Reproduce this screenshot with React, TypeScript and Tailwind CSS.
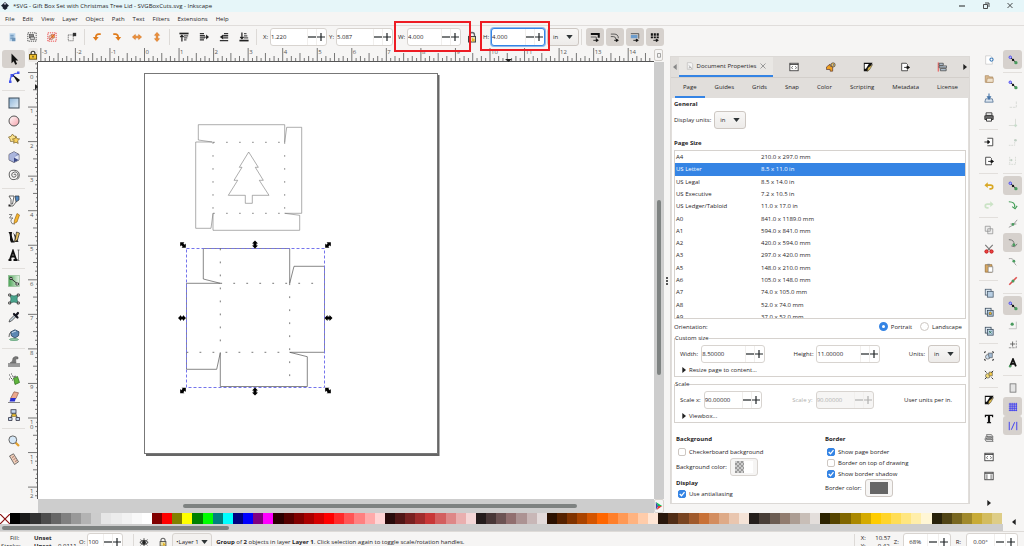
import type { ReactNode } from "react";
import clsx from "clsx";

const icons: Record<string, ReactNode> = {
  // toolbar
  selectAll: <><rect x="3" y="1.500" width="7" height="9.500" fill="#b9d3ea" /><path d="M4 4h4M4 6h4M4 8h3" stroke="#5d88b0" /><rect x="6" y="7" width="4" height="4" fill="#6d94b8" /></>,
  selectLayers: <><rect x="1" y="1" width="10" height="10" fill="none" stroke="#333" strokeDasharray="1.500 1" /><rect x="3" y="3" width="5" height="4" fill="#888" stroke="#444" strokeWidth=".7" /><path d="M4 6h5v3H4z" fill="#ccc" stroke="#444" strokeWidth=".7" /></>,
  deselect: <><rect x="1" y="1" width="10" height="10" fill="none" stroke="#e33" strokeDasharray="1.500 1" /><circle cx="5" cy="6.500" r="2.700" fill="#e9c9a8" stroke="#a66" strokeWidth=".7" /><path d="M5 3h4v4H6z" fill="#f3a53c" stroke="#a55" strokeWidth=".6" /><path d="M2 10l8-8" stroke="#d22" strokeWidth=".7" /></>,
  touch: <><rect x="1.500" y="3.500" width="6" height="7" fill="none" stroke="#555" strokeDasharray="1.500 1" /><rect x="7" y="1" width="4" height="4" fill="#333" /></>,
  rotL: <><path d="M10.500 2.500H8Q4.500 2.500 4.500 7" fill="none" stroke="#e07b1a" strokeWidth="2" /><path d="M1 6h7l-3.500 4.500z" fill="#e07b1a" /></>,
  rotR: <><path d="M1.500 2.500H4Q7.500 2.500 7.500 7" fill="none" stroke="#e07b1a" strokeWidth="2" /><path d="M4 6h7l-3.500 4.500z" fill="#e07b1a" /></>,
  flipH: <path d="M.5 6l3.500-3v2h4V3l3.500 3L8 9V7H4v2z" fill="#f0913a" stroke="#c9640a" strokeWidth=".6" />,
  flipV: <path d="M6 .5l3 3.500H7v4h2l-3 3.500L3 8h2V4H3z" fill="#f0913a" stroke="#c9640a" strokeWidth=".6" />,
  raiseTop: <><path d="M.5 1.800h11" stroke="#222" strokeWidth="2" /><path d="M6 4.500h5M6 7h4M6 9.500h3" stroke="#555" strokeWidth="1.500" /><path d="M3.500 11.500V4M1.500 6l2-2 2 2" fill="none" stroke="#222" strokeWidth="1.500" /></>,
  raise: <><path d="M1 2h5M1 4.500h6M1 7h6M1 9.500h5" stroke="#333" strokeWidth="1.600" /><path d="M6 5.700h2.500V3L12 6 8.500 9V6.500H6z" fill="#222" /></>,
  lower: <><path d="M6 2h5M5 4.500h6M5 7h6M1 10.300h10" stroke="#333" strokeWidth="1.600" /><path d="M5 3L1 6l4 3z" fill="#222" /></>,
  lowerBottom: <><path d="M.5 10.300h11" stroke="#222" strokeWidth="2" /><path d="M6 2h3M6 4.500h4M6 7h5" stroke="#555" strokeWidth="1.500" /><path d="M3.500 .5V8M1.500 6l2 2 2-2" fill="none" stroke="#222" strokeWidth="1.500" /></>,
  lock: <><path d="M3.700 6V3.800q0-2.300 2.300-2.300t2.300 2.300V6" fill="none" stroke="#333" strokeWidth="1.400" /><rect x="1.700" y="5.500" width="8.600" height="5.500" fill="#f2c230" stroke="#5c4500" /><path d="M6 7v2" stroke="#333" strokeWidth="1.300" /></>,
  unlock: <><path d="M3.500 6V4q0-2.500 2.500-2.500T8.500 4v2" fill="none" stroke="#666" strokeWidth="1.300" /><rect x="2.500" y="5.500" width="7" height="5.500" fill="#e9dfa6" stroke="#444" /><path d="M6 7l3.500 2L6 11z" fill="#e5b32b" /></>,
  scaleStroke: <><path d="M1 2.500h9.500V7" fill="none" stroke="#111" strokeWidth="2.400" /><path d="M1 6h6.500v2.500" fill="none" stroke="#444" /><path d="M4 10h5M7.500 8.500L10 10 7.500 11.500z" stroke="#111" fill="#111" /></>,
  scaleCorner: <><path d="M1 2.500h4q5 0 5 5" fill="none" stroke="#444" /><path d="M1 5.500h3q3 0 3 3" fill="none" stroke="#444" /><path d="M5 10h4M7.500 8.500L10 10 7.500 11.500z" stroke="#111" fill="#111" /></>,
  scaleGrad: <><path d="M1 2h9.500v6" fill="none" stroke="#444" /><path d="M1 3.500h8v4H1z" fill="#6c9ccc" /><path d="M4 10h5M7.500 8.500L10 10 7.500 11.500z" stroke="#111" fill="#111" /></>,
  scalePattern: <><path d="M1 3h10" stroke="#111" strokeWidth="3" strokeDasharray="2.500 1" /><path d="M1 6.500h10" stroke="#111" strokeWidth="2" strokeDasharray="2.500 1" /><path d="M4 10h5M7.500 8.500L10 10 7.500 11.500z" stroke="#111" fill="#111" /></>,
  // toolbox
  select: <path d="M3.500 .5v9.800l2.200-2 1.600 3.500 1.800-.9L7.500 7.500h2.800z" fill="#111" />,
  node: <><path d="M2 11Q2 2 11 2" fill="none" stroke="#4a5cf0" strokeWidth="1.200" /><path d="M1 9.500h2.500V12H1zM9 .5h2.500V3H9zM2.500 3H6v3H2.500z" fill="#4455ee" /><path d="M4.500 3.500l7.500 5.500-2.500 2.500z" fill="#111" /></>,
  rect: <rect x="1" y="1" width="10" height="10" fill="url(#gBlue)" stroke="#3a4a58" />,
  circle: <circle cx="6" cy="6" r="5" fill="url(#gPink)" stroke="#444" strokeWidth=".9" />,
  star: <><path d="M4.500 1l1.300 2L8 3.300 7.300 8 2.500 8.500 2 6 .5 4l2.500-.7z" fill="#fbe28c" stroke="#7a6226" strokeWidth=".7" /><path d="M8 3.500l1 2.200 2.600.2-2 1.900.6 2.700L8 9.200l-2.400 1 .5-2.500-1.700-1.800L7 5.700z" fill="#fbd15b" stroke="#7a6226" strokeWidth=".7" /></>,
  cube: <><path d="M6 .7l5 2.700v5.500L6 11.500 1 8.900V3.400z" fill="#8f9bc9" stroke="#445" strokeWidth=".7" /><path d="M1.300 3.500L6 1l3 1.600L6.500 6v5L1.300 8.700z" fill="#aab5dc" /><path d="M6.500 6l4.200-2v4.800L6.500 11z" fill="#dfe4f4" /><path d="M6 6.500v4.800L10.500 9z" fill="#3d4a86" /></>,
  spiral: <path d="M6 6q0-1 1-1t1 1.500T6 8.200 3.700 6 6.500 3 10 6.300 6 10.600 1.200 6 6 1.200 11.300 6q0 3-2 4.500" fill="none" stroke="#555" strokeWidth=".9" />,
  bezier: <><path d="M1 1h5L4.500 9H3Q4 4 1 1zM2 11h3" fill="#fff" stroke="#444" strokeWidth=".8" /><path d="M7 1h4v4L8 7zM8 7l-3 4" fill="#4f86c0" stroke="#333" strokeWidth=".7" /><rect x=".5" y="9.500" width="2" height="2" fill="#222" /></>,
  pencil: <><path d="M1 1.500h3L1.500 5H5Q2 6.500 3 8.500q0 3 4 2.500" fill="none" stroke="#666" strokeWidth=".8" /><path d="M9 .5l2.500 1.500L9 9l-3 1.500L6.500 7z" fill="#f6b52d" stroke="#8a5a10" strokeWidth=".6" /></>,
  calligraphy: <><path d="M.5 1H4Q3 6 6.500 11.500H3Q1.500 10 2 6 2 3 .5 1z" fill="#111" /><path d="M4.500 1q3 4 2 10h4L8 5z" fill="#222" /><path d="M8.500 1L11.500 2 9.500 9 6.500 11l1-4z" fill="#e7c161" stroke="#222" strokeWidth=".7" /></>,
  text: <><path d="M.5 11h3M5.500 11h4M2 10.500L5 2l3 8.500M3.200 7.500h4" fill="none" stroke="#111" strokeWidth="1.900" /><path d="M9.500 1h2M9.500 11.500h2M10.500 1v10.500" stroke="#555" strokeWidth=".7" /></>,
  gradient: <><rect x=".5" y=".5" width="11" height="11" fill="url(#gGreen)" stroke="#89b78e" strokeWidth=".6" /><path d="M3 3.500l6 5" stroke="#333" /><path d="M2 2.500h2v2H2zM8 8h2.500v2H8z" fill="#fff" stroke="#222" strokeWidth=".8" /></>,
  mesh: <><path d="M2 2q4 2 8 0-2 4 0 8-4-2-8 0 2-4 0-8z" fill="#49a38c" stroke="#2d6d5c" strokeWidth=".7" /><path d="M.7 1h2v2h-2zM9.300 1h2v2h-2zM.7 9h2v2h-2zM9.300 9h2v2h-2z" fill="#fff" stroke="#222" strokeWidth=".8" /></>,
  dropper: <><path d="M1 11l1-2.500L6.500 4 8 5.500 3.500 10z" fill="#c5d5e0" stroke="#444" strokeWidth=".8" /><path d="M6 3l3.500 3.500M8 4.500L10 2" stroke="#15151f" strokeWidth="2.200" strokeLinecap="round" /></>,
  bucket: <><ellipse cx="6" cy="10.500" rx="4.500" ry="1" fill="#9fc7ae" stroke="#4d9b6a" strokeWidth=".7" /><path d="M2.500 3L7 .8l4 2-.5 4L7 9 3.500 7z" fill="#5c88b3" stroke="#2b4159" strokeWidth=".8" /><path d="M4 3.500l4-1.500" stroke="#cde" /><path d="M3 3q-2 1-2 5" stroke="#555" fill="none" strokeWidth=".9" /></>,
  tweak: <><path d="M0 8h12v4H0z" fill="#999" /><path d="M2 8q3-1 3-5 2-2.500 5-1v2Q7 2.500 8 8z" fill="#777" stroke="#555" strokeWidth=".5" /></>,
  spray: <><path d="M1 2h1M3 1h1M4 3h1M2 4h1M1 6h1M3 5.500h1M4 7h1" stroke="#555" /><path d="M5.500 5l4-1.500 2 6-4.500 2z" fill="#5fb53c" stroke="#2d6b1c" strokeWidth=".7" /><path d="M5 3.500l2.500-1 .8 1.700L6 5z" fill="#777" /></>,
  eraser: <><path d="M6 .8l4.500 1L8 7.500H2.500z" fill="#eda98d" stroke="#7a4a3a" strokeWidth=".6" /><path d="M2.700 7h5.200L6.800 10.500H1.500z" fill="#2a2fd0" /><path d="M0 11.500h12" stroke="#555" strokeWidth=".7" /></>,
  connector: <><path d="M5 4L2.500 9M7 4l2.500 5" stroke="#444" /><rect x="3" y=".7" width="5" height="3.500" fill="#c3d7ee" stroke="#334" strokeWidth=".8" /><rect x="4" y="5" width="4" height="2.500" fill="#f3c02e" stroke="#664" strokeWidth=".6" /><path d="M.5 8.500h3.500v3H.5zM8 8.500h3.500v3H8z" fill="#c3d7ee" stroke="#334" strokeWidth=".8" /></>,
  zoom: <><path d="M7.500 7.500L11 11" stroke="#e3a02c" strokeWidth="2.200" /><circle cx="4.800" cy="4.800" r="3.900" fill="#d6e8f7" stroke="#666" /></>,
  measure: <><path d="M1.500 3l4-2.200 5 8L6.500 11.500z" fill="#f0cfb9" stroke="#555" strokeWidth=".8" /><path d="M4 4.500l2-1M5.500 6.500l2-1M7 8.500l2-1" stroke="#855" strokeWidth=".7" /></>,
  // commands
  newDoc: <><path d="M2 1h6l2 2v8H2z" fill="#fff" stroke="#bbb" strokeWidth=".7" /><circle cx="9" cy="5.500" r="1.900" fill="#fff" stroke="#3b7ab8" strokeWidth="1.300" /></>,
  open: <><path d="M1.500 2h4l1 1.500h4V10h-9z" fill="#d9b98f" stroke="#a9855a" strokeWidth=".8" /><path d="M4 5h7v5H3z" fill="#f0e2cc" stroke="#a9855a" strokeWidth=".7" /></>,
  save: <><path d="M2 7h8l1 4H1z" fill="#dbe5ef" stroke="#4a6a90" strokeWidth=".9" /><path d="M6 .5v5M4.200 4.500L6 7.500l1.800-3z" fill="#4775a8" stroke="#4775a8" strokeWidth="1.300" /></>,
  print: <><path d="M1 4.500h10v4.500H1z" fill="#777" stroke="#222" /><path d="M2.500 1h7v3h-7zM3 7.500h6V11H3z" fill="#fff" stroke="#222" /></>,
  import: <><path d="M4 1.500h6.500v9H4" fill="#fff" stroke="#333" /><path d="M.5 6h5M4.500 4L7 6 4.500 8z" stroke="#111" fill="#111" /></>,
  export: <><path d="M9 4V3L7.500 1.500H2v9h7V9" fill="#fff" stroke="#333" /><path d="M5 6.500h4M8.500 4.500L11.500 6.500l-3 2z" stroke="#111" fill="#111" /></>,
  undo: <><path d="M3 5h5q2.500 0 2.500 2.200T8 9.500H6.500" fill="none" stroke="#d9a825" strokeWidth="2" /><path d="M4.500 1.500v7L.5 5z" fill="#d9a825" /></>,
  redo: <><path d="M9 5H4Q1.500 5 1.500 7.200T4 9.500h1.500" fill="none" stroke="#cbe3c6" strokeWidth="2" /><path d="M7.500 1.500v7l4-3.500z" fill="#cbe3c6" /></>,
  copy: <path d="M1.500 1.500h6v6h-6zM4.500 4.500h6v6h-6z" fill="#eee" stroke="#888" strokeWidth=".8" />,
  cut: <><path d="M1.500 1L8 8M10.500 1L4 8" stroke="#777" strokeWidth="1.300" /><circle cx="3" cy="9" r="2" fill="#e44" stroke="#b11" /><circle cx="9" cy="9" r="2" fill="#e44" stroke="#b11" /></>,
  paste: <><path d="M1.500 2h8v9h-8z" fill="#d8a860" stroke="#8a6430" strokeWidth=".8" /><path d="M4 1h3v2H4z" fill="#888" /><path d="M5 4.500h5.500V11H5z" fill="#fff" stroke="#777" strokeWidth=".8" /></>,
  duplicate: <><rect x="1.500" y="1.500" width="7" height="7" fill="#dce8f2" stroke="#456" strokeWidth=".9" /><rect x="4" y="4" width="7" height="7" fill="#b9cfe3" stroke="#456" strokeWidth=".9" /></>,
  clone: <><rect x="1.500" y="1.500" width="7" height="7" fill="#dce8f2" stroke="#345" strokeWidth=".9" /><rect x="4" y="4" width="7" height="7" fill="#b9cfe3" stroke="#345" strokeWidth=".9" /><path d="M6 9V7l1-1h1l1 1v2z" fill="#e8b42e" stroke="#333" strokeWidth=".5" /></>,
  unlink: <><rect x="1.500" y="1.500" width="7" height="7" fill="#dce8f2" stroke="#345" strokeWidth=".9" /><rect x="4" y="4" width="7" height="7" fill="#b9cfe3" stroke="#345" strokeWidth=".9" /><path d="M6 9l3-3M6 6l3 3" stroke="#375" /></>,
  group: <><circle cx="4.500" cy="7" r="2.700" fill="#cde" stroke="#555" strokeWidth=".8" /><path d="M5 2.500h5V8H6z" fill="#9fb9d3" stroke="#555" strokeWidth=".7" /><path d="M.8 2.500V1h1.500M9.700 11h1.500V9.500M.8 9.500V11h1.500M11.200 2.500V1H9.700" fill="none" stroke="#111" /></>,
  ungroup: <><circle cx="4.500" cy="7" r="2.700" fill="#f5dd7a" stroke="#555" strokeWidth=".8" /><path d="M6 2.500h4V7H6z" fill="#f3c945" stroke="#555" strokeWidth=".7" /><path d="M1 1l2 2M11 11L9 9M1 11l2-2M11 1L9 3" fill="none" stroke="#111" /></>,
  fillStroke: <><path d="M1 1h10.500L6 11H1z" fill="#111" /><path d="M2 2.500h5L3.500 8H2z" fill="#fff" /><path d="M11.500 3L8 9l-3 2 1-4z" fill="#f0c94d" stroke="#333" strokeWidth=".6" /></>,
  textDlg: <path d="M1 1h10v3H9.800L9.300 2.500H7.300V9.500L8.500 10v1h-5v-1l1.200-.5v-7h-2L2.200 4H1z" fill="#111" />,
  layers: <path d="M3 2h6l2 3H4zM2 4.500h7l2 3H3zM1 7h8l2 3H2.500z" fill="#eee" stroke="#555" strokeWidth=".9" />,
  xml: <><rect x="1" y="1.500" width="10" height="9" fill="#fff" stroke="#333" /><path d="M1 3h10" stroke="#333" /><path d="M4.500 5L3 6.800l1.500 1.700M7.500 5L9 6.800 7.500 8.500" fill="none" stroke="#555" /></>,
  align: <><rect x="1" y="1.500" width="10" height="9" fill="#fff" stroke="#333" /><path d="M1 3h10M3.500 4v6M8.500 4v6" stroke="#555" /></>,
  objects: <><path d="M1.500 .5v11" stroke="#e33" /><path d="M2.500 1.500h5V4h-5zM2.500 4.700h9v2.300h-9zM4 8h7v2.500H4z" fill="#bcd" stroke="#444" strokeWidth=".9" /></>,
  transform: <><path d="M.5 6L5 2.500V5h3v6H5V9L.5 9z" fill="#f0a020" stroke="#533" strokeWidth=".8" /><circle cx="8.500" cy="3.500" r="2.500" fill="#eec060" stroke="#333" strokeWidth=".8" /><path d="M8.500 2.500l1 1-1 1" fill="none" stroke="#36b" /></>,
  docProps: <><path d="M2 1h6l2 2v8H2z" fill="#f5f5f5" stroke="#b2b0ae" strokeWidth=".8" /><path d="M4 5l5 5M4 9l3-1" stroke="#888" /></>,
  // snapping
  snap: <><path d="M3 3l6.500 6" stroke="#222" strokeWidth="1.200" /><circle cx="2.700" cy="2.700" r="1.500" fill="#c8c8ff" stroke="#33e" /><circle cx="6" cy="6" r="1.400" fill="#111" /><circle cx="9.500" cy="9.200" r="2" fill="#4a9b5e" /></>,
  snapBox: <path d="M2 10h8V2" fill="none" stroke="#d5d8d3" strokeDasharray="3 1" />,
  snapEdge: <><path d="M1 9h10M9 1v10" fill="none" stroke="#d5d8d3" /><circle cx="9" cy="9" r="1.500" fill="#c7dccb" /></>,
  snapCorner: <><path d="M1 10h7V2" fill="none" stroke="#d5d8d3" strokeDasharray="2 1" /><circle cx="9" cy="4" r="1.500" fill="#c0cfc3" /></>,
  snapMid: <><path d="M1 10h8M9 1v9M2 1v9" fill="none" stroke="#d5d8d3" strokeDasharray="2 1" /><circle cx="4" cy="5" r="1.300" fill="#c0cfc3" /></>,
  snapPath: <><path d="M1 2q8 0 7 7" fill="none" stroke="#3d9b52" strokeWidth="1.300" /><path d="M5 8l3.500 2.500L11 7" fill="none" stroke="#3d9b52" strokeWidth="1.300" /></>,
  snapCross: <><path d="M1 10q5-1 10-9M3 6h7" fill="none" stroke="#888" /><circle cx="6" cy="6.500" r="1.600" fill="#4a9b5e" /></>,
  snapCusp: <><path d="M1 2q7 0 6 6M4 9.500l4 1L11 7" fill="none" stroke="#777" strokeWidth="1.200" /><circle cx="7" cy="8" r="1.800" fill="#4a9b5e" /></>,
  snapSmooth: <><path d="M1 2q5-1 6 3t3 5" fill="none" stroke="#999" /><circle cx="7" cy="5" r="1.700" fill="#4a9b5e" /></>,
  snapLine: <><path d="M1.500 10.500l9-9" stroke="#e05050" strokeWidth="2" /><circle cx="6" cy="6" r="1.800" fill="#4a9b5e" /></>,
  snapObj: <><path d="M1 10.500h9V2" fill="none" stroke="#bbb" /><circle cx="5" cy="5" r="1.900" fill="#4a9b5e" /></>,
  snapCenter: <><path d="M2.500 6h6M5.500 3v6" stroke="#555" /><path d="M1 10.500h9V2" fill="none" stroke="#888" strokeDasharray="3 1" /></>,
  snapText: <><path d="M2.500 10L6 1.500 9.500 10M4 7h4" fill="none" stroke="#111" strokeWidth="2.200" /><circle cx="2.500" cy="10" r="1.500" fill="#4a9b5e" /></>,
  snapPage: <rect x="2.500" y="1" width="7" height="10" fill="#e4e4e4" stroke="#777" />,
  snapGrid: <path d="M1 2.500h10M1 5h10M1 7.500h10M1 10h10M2.500 1v10M5 1v10M7.500 1v10M10 1v10" stroke="#3838f0" strokeWidth="1" />,
  snapGuide: <path d="M1.500 1v10M10.500 1v10M4 10.500L8 1.500" stroke="#4444f0" strokeWidth="1.200" />,
  eye: <><path d="M1 6.500q5-5 10 0-5 5-10 0z" fill="#ddd" stroke="#222" /><circle cx="6" cy="6.500" r="2.200" fill="#222" /><path d="M2 3l1 1.500M6 1.500v2M10 3L9 4.500M2 10l1-1M10 10L9 9M6 11V9.500" stroke="#222" /></>,
  right: <path d="M3.500 1.500L9 6 3.500 10.500z" fill="#222" />,
  left: <path d="M8.500 1.500L3 6l5.500 4.500z" fill="#222" />,
  leftDim: <path d="M8.500 1.500L3 6l5.500 4.500z" fill="#888" />,
};

const tools = ["select", "node", "|", "rect", "circle", "star", "cube", "spiral", "|", "bezier", "pencil", "calligraphy", "text", "|", "gradient", "mesh", "dropper", "bucket", "|", "tweak", "spray", "eraser", "connector", "|", "zoom", "measure"];
const commands = ["newDoc", "open", "save", "print", "|", "import", "export", "|", "undo", "redo", "|", "copy", "cut", "paste", "|", "duplicate", "clone", "unlink", "|", "group", "ungroup", "|", "fillStroke", "textDlg", "layers", "xml", "align"];
// a leading * marks a toggle that is on
const snaps = ["*snap", "|", "snap", "snapBox", "snapEdge", "snapCorner", "snapMid", "|", "*snap", "snapPath", "snapCross", "*snapCusp", "snapSmooth", "snapLine", "|", "*snap", "snapObj", "snapCenter", "snapText", "|", "snapPage", "*snapGrid", "*snapGuide"];

const pageSizes = [
  ["A4", "210.0 x 297.0 mm"],
  ["US Letter", "8.5 x 11.0 in"],
  ["US Legal", "8.5 x 14.0 in"],
  ["US Executive", "7.2 x 10.5 in"],
  ["US Ledger/Tabloid", "11.0 x 17.0 in"],
  ["A0", "841.0 x 1189.0 mm"],
  ["A1", "594.0 x 841.0 mm"],
  ["A2", "420.0 x 594.0 mm"],
  ["A3", "297.0 x 420.0 mm"],
  ["A5", "148.0 x 210.0 mm"],
  ["A6", "105.0 x 148.0 mm"],
  ["A7", "74.0 x 105.0 mm"],
  ["A8", "52.0 x 74.0 mm"],
  ["A9", "37.0 x 52.0 mm"],
];

const palette = (
  "000000 1a1a1a 333333 4d4d4d 666666 808080 999999 b3b3b3 cccccc e6e6e6 ececec f2f2f2 f9f9f9 ffffff " +
  "800000 ff0000 808000 ffff00 008000 00ff00 008080 00ffff 000080 0000ff 800080 ff00ff " +
  "2b0000 550000 800000 aa0000 d40000 ff0000 ff2a2a ff5555 ff8080 ffaaaa ffd5d5 " +
  "280b0b 501616 782121 a02c2c c83737 d35f5f de8787 e9afaf f4d7d7 " +
  "241c1c 483737 6c5353 916f6f ac9393 c8b7b7 e3dbdb " +
  "2b1100 552200 803300 aa4400 d45500 ff6600 ff7f2a ff9955 ffb380 ffccaa ffe6d5 " +
  "28170b 502d16 784421 a05a2c c87137 d38d5f deaa87 e9c6af f4e3d7 " +
  "241f1c 483e37 6c5d53 917c6f ac9d93 c8beb7 e3dedb " +
  "2b2200 554400 806600 aa8800 d4aa00 ffcc00 ffd42a ffdd55 ffe680 ffeeaa fff6d5 " +
  "28220b 504416 786721 a0892c c8ab37 d3bc5f decd87"
).split(" ");

function Icon({ name, className = "size-3" }: { name: string; className?: string }) {
  return (
    <svg viewBox="0 0 12 12" className={clsx("shrink-0", className)} aria-hidden="true">
      {icons[name]}
    </svg>
  );
}

function Caret() {
  return (
    <svg viewBox="0 0 8 5" className="pointer-events-none h-1 w-[7px] shrink-0" aria-hidden="true">
      <path d="M0 0h8L4 5z" fill="#2e3436" />
    </svg>
  );
}

function Sep() {
  return <div className="mx-[2px] h-4 w-px shrink-0 bg-[#dddad7]" />;
}

function ToolButtons({ names }: { names: string[] }) {
  return names.map((n) => (
    <button key={n} aria-label={n} className="flex h-[18px] w-5 shrink-0 items-center justify-center">
      <Icon name={n} className="size-[10px]" />
    </button>
  ));
}

type SpinProps = {
  id: string;
  label: string;
  value: string;
  width: string;
  focused?: boolean;
  disabled?: boolean;
  wide?: boolean;
  gap?: string;
};

function Spin({ id, label, value, width, focused, disabled, wide, gap = "gap-[2px]" }: SpinProps) {
  const button = clsx("flex h-full shrink-0 items-center justify-center border-l border-[#f1efed]", wide ? "w-[11px]" : "w-[9px]");
  return (
    <div className={clsx("flex shrink-0 items-center", gap, disabled && "text-[#b0b0ae]")}>
      <label htmlFor={id}>{label}</label>
      <div
        className={clsx(
          "flex h-[18px] items-center rounded-[3px] border pr-px",
          width,
          focused ? "border-[#3584e4] ring-1 ring-[#8db9ee]" : "border-[#d8d4d0]",
          disabled ? "bg-[#f6f5f4]" : "bg-white"
        )}
      >
        <input id={id} defaultValue={value} disabled={disabled} className={clsx("w-0 min-w-0 flex-1 bg-transparent outline-none", wide && "text-center")} />
        <button aria-label={`Decrease ${label}`} disabled={disabled} className={button}>
          <svg viewBox="0 0 8 8" className="size-2"><path d="M0 4h8" stroke="currentColor" strokeWidth="1.200" /></svg>
        </button>
        <button aria-label={`Increase ${label}`} disabled={disabled} className={button}>
          <svg viewBox="0 0 8 8" className="size-2"><path d="M0 4h8M4 0v8" stroke="currentColor" strokeWidth="1.200" /></svg>
        </button>
      </div>
    </div>
  );
}

function UnitSelect({ id, className }: { id: string; className?: string }) {
  return (
    <div className={clsx("flex h-[18px] w-8 shrink-0 items-center rounded-[3px] border border-[#cdc7c2] bg-gradient-to-b from-[#f8f7f6] to-[#edebe9] px-[5px]", className)}>
      <select id={id} aria-label={id} className="min-w-0 flex-1 appearance-none bg-transparent outline-none">
        <option>in</option>
        <option>mm</option>
      </select>
      <Caret />
    </div>
  );
}

function Check({ id, label, checked }: { id: string; label: string; checked?: boolean }) {
  return (
    <div className="flex h-[11px] items-center gap-[3px]">
      <span className="grid size-2 shrink-0">
        <input id={id} type="checkbox" defaultChecked={checked} className="col-start-1 row-start-1 size-2 appearance-none rounded-[2px] border border-[#cdc7c2] bg-white checked:border-[#3584e4] checked:bg-[#3584e4]" />
        {checked && (
          <svg viewBox="0 0 8 8" className="pointer-events-none col-start-1 row-start-1 size-2"><path d="M1.700 4l1.800 1.800L6.500 2.200" fill="none" stroke="#fff" strokeWidth="1.300" /></svg>
        )}
      </span>
      <label htmlFor={id}>{label}</label>
    </div>
  );
}

function Radio({ id, label, checked }: { id: string; label: string; checked?: boolean }) {
  return (
    <div className="flex items-center gap-[3px]">
      <input id={id} name="orientation" type="radio" defaultChecked={checked} className="size-[9px] appearance-none rounded-full border border-[#cdc7c2] bg-white checked:border-[3px] checked:border-[#3584e4]" />
      <label htmlFor={id}>{label}</label>
    </div>
  );
}

// one inch on the rulers, in screen pixels
const INCH = 34.55;

function tickLength(i: number) {
  if (i % 8 === 0) return 14;
  if (i % 4 === 0) return 9;
  return i % 2 === 0 ? 6 : 4;
}

function TopRuler() {
  const ticks = Array.from({ length: 142 }, (_, k) => k - 24);
  return (
    <svg className="h-[14px] w-full min-w-0 flex-1" aria-hidden="true">
      {ticks.map((i) => {
        const x = 106.5 + (i * INCH) / 8;
        return (
          <g key={i}>
            <path d={`M${x} 13V${14 - tickLength(i)}`} stroke="#555" strokeWidth=".8" />
            {i % 8 === 0 && <text x={x + 1} y="6" fontSize="6" fill="#555">{i / 8}</text>}
          </g>
        );
      })}
      <path d="M0 13.500h640" stroke="#555" />
      <path d="M467 11h7l-3.500 3z" fill="#222" />
    </svg>
  );
}

function SideRuler() {
  const ticks = Array.from({ length: 102 }, (_, k) => k - 2);
  return (
    <svg className="h-full w-[10px] shrink-0" aria-hidden="true">
      {ticks.map((i) => {
        const y = 10.5 + (i * INCH) / 8;
        const len = i % 8 === 0 ? 10 : i % 4 === 0 ? 5 : i % 2 === 0 ? 3 : 2;
        return (
          <g key={i}>
            <path d={`M10 ${y}H${10 - len}`} stroke="#555" strokeWidth=".8" />
            {i % 8 === 0 &&
              String(i / 8).split("").map((d, n) => (
                <text key={n} x="2" y={y + 6 + n * 5} fontSize="6" fill="#555">{d}</text>
              ))}
          </g>
        );
      })}
      <path d="M9.500 0v440" stroke="#555" />
      <path d="M7 22v6l3-3z" fill="#222" />
    </svg>
  );
}

const handles = [
  [183, 245, 45], [255, 244.5, 90], [328, 245, -45],
  [182, 318, 0], [328.5, 318, 0],
  [183, 390.5, -45], [255, 391.5, 90], [328, 390.5, 45],
];

function Drawing() {
  return (
    <svg className="h-full w-full bg-white" role="img" aria-label="Drawing canvas">
      <g transform="translate(-38 -62)" fill="none">
        <path d="M438.500 75v380H146" stroke="#666" strokeWidth="2" />
        <rect x="144.500" y="73.500" width="293" height="380" fill="#fff" stroke="#777" strokeWidth="1" />
        <g stroke="#777" strokeWidth=".6">
          <path d="M284.700 142V124.700H198.300V140L212.300 142H195.700V228.300H211L213 213.300V230.300H299.700V215.300L284.700 213.300H301.700V127.300H286.700z" />
          <path d="M248.700 152L258.300 167.300H255.300L263.300 180.300H259.300L269 195.300H252.300V203.300H245.300V195.300H228.300L237.700 180.300H234L242 167.300H239.300z" />
          <path d="M213 142.300H284.700M213 213.300H284.700M213 142V213.300M284.700 142V213.300" strokeDasharray="1.800 11.200" strokeWidth=".8" />
        </g>
        <g stroke="#555" strokeWidth=".7">
          <path d="M203.300 248.500V279L220.300 283.300H186.500V369.300H216.700L220.300 352.700V386.500H307.300V356.700L289.700 352.300H324.500V266.300H294L289.700 283.300V248.500z" />
          <path d="M220.300 248.500V352.700M289.700 283.300V387M220.300 283.300H324.500M186.500 352.300H289.700" strokeDasharray="1.800 11.200" strokeWidth=".8" />
        </g>
        <rect x="186.500" y="248.500" width="138" height="139" stroke="#7474ec" strokeDasharray="3 2" />
        {handles.map(([x, y, a]) => (
          <path key={`${x}-${y}`} transform={`translate(${x} ${y}) rotate(${a})`} d="M-4 0L-1 -3V-1.500H1V-3L4 0L1 3V1.500H-1V3z" fill="#000" />
        ))}
      </g>
    </svg>
  );
}

function IconColumn({ names, className }: { names: string[]; className?: string }) {
  return (
    <div className={clsx("flex shrink-0 flex-col items-center", className)}>
      {names.map((n, k) =>
        n === "|" ? (
          <div key={k} className="my-[2px] h-[2px] w-full border-b border-[#e2dfdc]" />
        ) : (
          <button key={k} aria-label={n.replace("*", "")} className={clsx("flex h-[19px] w-[19px] items-center justify-center rounded-[3px]", n[0] === "*" && "bg-[#d6d1cd]")}>
            <Icon name={n.replace("*", "")} className="size-[10px]" />
          </button>
        )
      )}
    </div>
  );
}

function DocumentProperties() {
  return (
    <section className="mt-2 mb-[9px] flex w-[300px] shrink-0 flex-col border border-[#dcd9d6] bg-[#e1dedb]">
      <div className="flex h-[21px] shrink-0 items-stretch border-b border-[#d3cfcb]">
        <button aria-label="Scroll tabs left" className="flex w-2 items-center"><Icon name="leftDim" className="size-2" /></button>
        <button className="flex w-[94px] items-center justify-center gap-[3px] border-b-2 border-[#3584e4] bg-[#e9e7e4]">
          <Icon name="docProps" className="size-2" />
          Document Properties
          <svg viewBox="0 0 6 6" className="ml-px size-[6px]" aria-hidden="true"><path d="M.5 .5l5 5M5.500 .5l-5 5" stroke="#999" /></svg>
        </button>
        <div className="flex flex-1 pl-[2px]">
          {["xml", "transform", "fillStroke", "export", "objects"].map((n) => (
            <button key={n} aria-label={n} className="flex flex-1 items-center justify-center"><Icon name={n} className="size-[10px]" /></button>
          ))}
        </div>
        <button aria-label="Scroll tabs right" className="flex w-2 items-center"><Icon name="right" className="size-2" /></button>
      </div>
      <nav className="flex h-5 shrink-0 justify-between pr-[3px] pl-1">
        {["Page", "Guides", "Grids", "Snap", "Color", "Scripting", "Metadata", "License"].map((t) => (
          <button key={t} className={clsx("border-b-2 px-2", t === "Page" ? "border-[#3584e4]" : "border-transparent")}>{t}</button>
        ))}
      </nav>
      <div className="mx-px flex min-h-0 flex-1 flex-col bg-white px-[2px] pt-[2px]">
        <h2 className="h-[11px] font-bold">General</h2>
        <div className="flex items-center gap-[3px]">
          <label htmlFor="display-units">Display units:</label>
          <UnitSelect id="display-units" />
        </div>
        <h2 className="mt-[10px] h-[11px] font-bold">Page Size</h2>
        <div className="h-[169px] shrink-0 overflow-hidden border border-[#d6d2ce]">
          <table className="h-[172px] w-full border-collapse text-left">
            <tbody>
              {pageSizes.map(([name, size]) => (
                <tr key={name} className={name === "US Letter" ? "bg-[#3584e4] text-white" : ""}>
                  <td className="w-[86px] p-0 pl-px">{name}</td>
                  <td className="p-0">{size}</td>
                </tr>
              ))}
            </tbody>
          </table>
        </div>
        <div className="flex h-[15px] shrink-0 items-center gap-2 pr-1">
          <span className="flex-1">Orientation:</span>
          <Radio id="portrait" label="Portrait" checked />
          <Radio id="landscape" label="Landscape" />
        </div>
        <fieldset className="h-[43px] shrink-0 border border-[#d6d2ce] px-[5px]">
          <legend className="-ml-[5px]">Custom size</legend>
          <div className="mt-[3px] flex items-center justify-between">
            <Spin id="width" label="Width:" value="8.50000" width="w-16" gap="gap-[3px]" />
            <Spin id="height" label="Height:" value="11.00000" width="w-16" gap="gap-[3px]" />
            <div className="flex items-center gap-[3px]">
              <label htmlFor="units">Units:</label>
              <UnitSelect id="units" />
            </div>
          </div>
          <button className="mt-[3px] flex items-center gap-px"><Icon name="right" className="size-2" />Resize page to content...</button>
        </fieldset>
        <fieldset className="mt-[3px] h-[43px] shrink-0 border border-[#d6d2ce] px-[5px]">
          <legend className="-ml-[5px]">Scale</legend>
          <div className="mt-[3px] flex items-center justify-between pr-2">
            <Spin id="scale-x" label="Scale x:" value="90.00000" width="w-[58px]" gap="gap-[3px]" />
            <Spin id="scale-y" label="Scale y:" value="90.00000" width="w-[58px]" gap="gap-[3px]" disabled />
            <span>User units per in.</span>
          </div>
          <button className="mt-[3px] flex items-center gap-px"><Icon name="right" className="size-2" />Viewbox...</button>
        </fieldset>
        <div className="mt-3 grid grid-cols-2 px-[2px]">
          <div>
            <h2 className="font-bold">Background</h2>
            <div className="mt-[3px] pl-[2px]"><Check id="checkerboard" label="Checkerboard background" /></div>
            <div className="mt-px flex items-center gap-[3px]">
              Background color:
              <button aria-label="Background color" className="flex h-[18px] w-7 items-center justify-center rounded-[3px] border border-[#d8d4d0] bg-[#f6f5f4]">
                <span className="h-3 w-[9px] bg-[repeating-conic-gradient(#999_0_25%,#ccc_0_50%)] bg-[length:4px_4px]" />
                <span className="h-3 w-[9px] bg-white" />
              </button>
            </div>
            <h2 className="mt-[3px] font-bold">Display</h2>
            <div className="mt-px pl-[2px]"><Check id="antialias" label="Use antialiasing" checked /></div>
          </div>
          <div className="pl-[5px]">
            <h2 className="font-bold">Border</h2>
            <div className="mt-[3px] pl-[2px]">
              <Check id="show-border" label="Show page border" checked />
              <Check id="border-top" label="Border on top of drawing" />
              <Check id="border-shadow" label="Show border shadow" checked />
            </div>
            <div className="flex items-center gap-[3px]">
              Border color:
              <button aria-label="Border color" className="flex h-[18px] w-7 items-center justify-center rounded-[3px] border border-[#cdc7c2] bg-[#f6f5f4]">
                <span className="h-3 w-[18px] bg-[#666]" />
              </button>
            </div>
          </div>
        </div>
      </div>
    </section>
  );
}

export default function App() {
  return (
    <div className="flex h-screen flex-col overflow-hidden bg-[#f6f5f4] font-['Open_Sans',sans-serif] text-[6px] leading-[8px] text-[#1f2426]">
      <svg className="absolute size-0" aria-hidden="true">
        <linearGradient id="gBlue" x2="1" y2="1"><stop stopColor="#8db4d8" /><stop offset="1" stopColor="#e8f1f8" /></linearGradient>
        <linearGradient id="gPink" x2="1" y2="1"><stop stopColor="#fff" /><stop offset="1" stopColor="#f5a0a8" /></linearGradient>
        <linearGradient id="gGreen" x2="1"><stop stopColor="#4aa455" /><stop offset="1" stopColor="#e8f5e8" /></linearGradient>
      </svg>

      <header className="flex h-3 shrink-0 items-center gap-1 bg-[#e6f6f9] pl-px">
        <svg viewBox="0 0 12 12" className="size-2" aria-hidden="true"><path d="M6 0l6 5.500-3 2.300 1 1.200-4 3-4-3 1-1.200L0 5.500z" fill="#1b2230" /><path d="M4 3l2-2 2 2-2 1z" fill="#dde" /></svg>
        <h1 className="flex-1">*SVG - Gift Box Set with Christmas Tree Lid - SVGBoxCuts.svg - Inkscape</h1>
        <div className="flex gap-3 pr-2">
          <button aria-label="Minimize"><svg viewBox="0 0 12 12" className="size-3"><path d="M3 6h6" stroke="#222" /></svg></button>
          <button aria-label="Restore"><svg viewBox="0 0 12 12" className="size-3"><path d="M3.500 4.500h4v4h-4zM5 3h4v4" fill="none" stroke="#222" strokeWidth=".8" /></svg></button>
          <button aria-label="Close"><svg viewBox="0 0 12 12" className="size-3"><path d="M3.500 3l5 5M8.500 3l-5 5" stroke="#222" strokeWidth=".8" /></svg></button>
        </div>
      </header>

      <nav className="flex h-[14px] shrink-0 items-center gap-2 border-b border-[#e0dddb] pl-[5px]">
        {["File", "Edit", "View", "Layer", "Object", "Path", "Text", "Filters", "Extensions", "Help"].map((m) => (
          <button key={m}>{m}</button>
        ))}
      </nav>

      <div className="flex h-[22px] shrink-0 items-center pl-[2px]">
        <ToolButtons names={["selectAll", "selectLayers", "deselect", "touch"]} />
        <Sep />
        <ToolButtons names={["rotL", "rotR", "flipH", "flipV"]} />
        <Sep />
        <div className="flex pl-[2px]"><ToolButtons names={["raiseTop", "raise", "lower", "lowerBottom"]} /></div>
        <Sep />
        <div className="flex items-center gap-[2px] pl-1">
          <Spin id="x" label="X:" value="1.220" width="w-[57px]" />
          <Spin id="y" label="Y:" value="5.087" width="w-[57px]" />
          <div className="relative ml-[3px]">
            <Spin id="w" label="W:" value="4.000" width="w-[54px]" />
            <span className="pointer-events-none absolute -top-[7px] -right-[10px] -bottom-[6px] -left-1 z-10 border-2 border-[#ed1c24]" />
          </div>
          <button aria-label="Lock ratio" className="mx-[3px]"><Icon name="unlock" /></button>
          <div className="relative">
            <Spin id="h" label="H:" value="4.000" width="w-[54px]" focused />
            <span className="pointer-events-none absolute -top-[7px] -right-[5px] -bottom-[5px] -left-[3px] z-10 border-2 border-[#ed1c24]" />
          </div>
          <UnitSelect id="toolbar-units" />
        </div>
        <Sep />
        <div className="flex gap-[2px] pl-[2px]">
          {["scaleStroke", "scaleCorner", "scaleGrad", "scalePattern"].map((n) => (
            <button key={n} aria-label={n} className="flex size-[18px] items-center justify-center rounded-[3px] bg-[#d6d1cd]"><Icon name={n} className="size-[10px]" /></button>
          ))}
        </div>
      </div>

      <div className="flex min-h-0 flex-1">
        <div className="flex w-7 shrink-0 flex-col items-start pt-[2px] pl-[2px]">
          {tools.map((n, k) =>
            n === "|" ? (
              <div key={k} className="my-[3px] h-[2px] w-[23px] border-b border-[#e2dfdc]" />
            ) : (
              <button key={k} aria-label={n} className={clsx("flex h-[18px] w-[23px] items-center justify-center rounded-[3px]", n === "select" && "bg-[#d6d1cd]")}>
                <Icon name={n} />
              </button>
            )
          )}
        </div>

        <div className="flex min-w-0 flex-1 flex-col">
          <div className="flex h-[14px] shrink-0">
            <button aria-label="Lock guides" className="flex w-[10px] items-center justify-center rounded-[2px] bg-[#ece9e7]"><Icon name="lock" className="size-[10px]" /></button>
            <TopRuler />
            <button aria-label="Guide options" className="my-px mr-px flex w-[9px] items-center justify-center rounded-[2px] border border-[#d0ccc8]"><svg viewBox="0 0 8 8" className="size-[6px]"><path d="M2 7V2h4v5z" fill="none" stroke="#888" /></svg></button>
          </div>
          <div className="flex min-h-0 flex-1">
            <SideRuler />
            <div className="min-w-0 flex-1"><Drawing /></div>
            <div className="flex w-[10px] shrink-0 flex-col items-center bg-[#cdcdcd] pt-[138px]">
              <div className="h-[175px] w-1 rounded-full bg-[#7e8281]" />
            </div>
          </div>
          <div className="flex h-[14px] shrink-0 pl-[10px]">
            <div className="flex flex-1 items-center bg-[#cdcdcd] pl-[145px]">
              <div className="h-1 w-[394px] rounded-full bg-[#7e8281]" />
            </div>
            <button aria-label="Color managed view" className="flex w-[10px] items-center justify-center rounded-[2px] border border-[#d8d4d0]">
              <svg viewBox="0 0 10 10" className="size-2"><path d="M1 0l8 5H4z" fill="#00c853" /><path d="M2 10l7-5H4z" fill="#e53935" /><path d="M1 0v10l3-5z" fill="#3949ab" /></svg>
            </button>
          </div>
        </div>

        <div className="flex w-[6px] shrink-0 items-center justify-center">
          <svg viewBox="0 0 4 8" className="h-2 w-1"><path d="M2 0v2M2 3v2M2 6v2" stroke="#222" strokeWidth="1.500" /></svg>
        </div>
        <DocumentProperties />

        <div className="ml-[9px] flex w-[19px] shrink-0 flex-col items-center justify-between pt-[2px] pb-[6px]">
          <IconColumn names={commands} />
          <button aria-label="More commands"><Icon name="right" className="size-2" /></button>
        </div>
        <IconColumn names={snaps} className="mr-[2px] ml-[5px] w-[19px] pt-[2px]" />
      </div>

      <div className="flex h-[18px] shrink-0">
        <div className="flex min-w-0 flex-1 flex-col">
          <div className="flex h-[11px]">
            <button aria-label="No color" className="flex flex-1 items-center justify-center bg-white">
              <svg viewBox="0 0 10 10" className="size-[10px]"><path d="M0 0l10 10M10 0L0 10" stroke="#8a1010" strokeWidth="1.200" /></svg>
            </button>
            {palette.map((c, k) => (
              <button key={k} aria-label={`#${c}`} className="flex-1" style={{ backgroundColor: `#${c}` }} />
            ))}
          </div>
          <div className="flex h-[7px] items-center bg-[#cdcdcd] pl-[2px]">
            <div className="h-1 w-[227px] rounded-full bg-[#7e8281]" />
          </div>
        </div>
        <button aria-label="Palette menu" className="flex w-[21px] items-center justify-center"><Icon name="left" className="size-2" /></button>
      </div>

      <footer className="h-[15px] shrink-0 overflow-hidden border-t border-[#dedbd8]">
        <div className="flex h-5 items-center">
          <div className="grid w-[79px] shrink-0 grid-cols-[34px_24px_21px]">
            <span className="pl-[10px]">Fill:</span><b className="col-span-2">Unset</b>
            <span className="pl-px">Stroke:</span><b>Unset</b><span>0.0111</span>
          </div>
          <Spin id="opacity" label="O:" value="100" width="w-9" />
          <div className="ml-[10px] h-4 w-px bg-[#dddad7]" />
          <button aria-label="Layer visibility" className="flex w-5 justify-center"><Icon name="eye" className="size-[10px]" /></button>
          <button aria-label="Layer lock" className="flex w-[18px] justify-center"><Icon name="unlock" className="size-[10px]" /></button>
          <div className="flex h-[18px] w-10 shrink-0 items-center rounded-[3px] border border-[#d8d4d0] bg-[#f3f1ef] px-[3px]">
            <select aria-label="Layer" className="min-w-0 flex-1 appearance-none bg-transparent outline-none"><option>•Layer 1</option></select>
            <Caret />
          </div>
          <p className="ml-1 flex-1 truncate"><b>Group</b> of <b>2</b> objects in layer <b>Layer 1</b>. Click selection again to toggle scale/rotation handles.</p>
          <div className="grid w-10 shrink-0 grid-cols-2 border-l border-[#dddad7] pr-1 pl-[6px]">
            <span>X:</span><span className="text-right">10.57</span>
            <span>Y:</span><span className="text-right">0.42</span>
          </div>
          <Spin id="zoom" label="Z:" value="68%" width="w-12" gap="gap-1" wide />
          <div className="w-[5px]" />
          <Spin id="rotation" label="R:" value="0.00°" width="w-[52px]" gap="gap-[5px]" wide />
          <div className="w-[6px]" />
        </div>
      </footer>
    </div>
  );
}
